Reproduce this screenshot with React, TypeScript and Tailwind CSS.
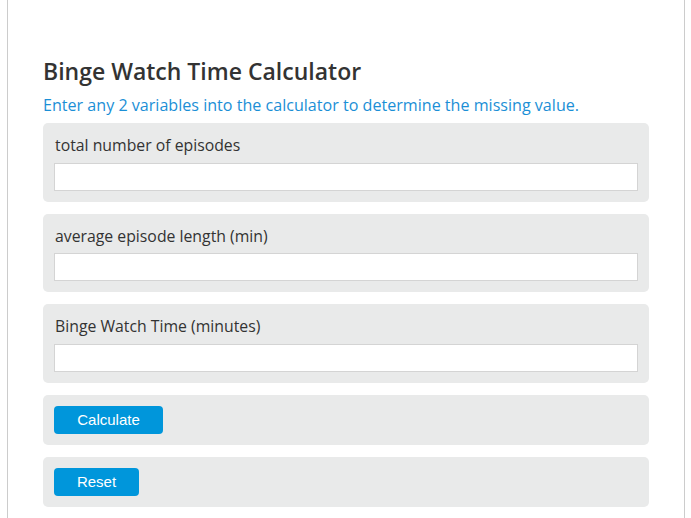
import React from "react";

function Field({ label }: { label: string }) {
  return (
    <div className="rounded-[5px] bg-[#e9eaea] px-[11px] pt-[11px] pb-[11px]">
      <div className="h-[21.67px] text-[15.8px] leading-[22px] text-[#333] pl-[1px]">{label}</div>
      <input className="mt-[7px] block h-[28px] w-full border border-[#d4d4d4] bg-white" />
    </div>
  );
}

function ButtonRow({ label, w }: { label: string; w: string }) {
  return (
    <div className="rounded-[5px] bg-[#e9eaea] p-[11px]">
      <button
        className={`${w} h-[28px] rounded-[4px] bg-[#0096db] text-[15px] text-white`}
        style={{ fontFamily: '"Liberation Sans", Arial, sans-serif' }}
      >
        {label}
      </button>
    </div>
  );
}

export default function App() {
  return (
    <div className="h-[518px] w-[691px] bg-white" style={{ fontFamily: '"Open Sans", "Noto Sans", sans-serif' }}>
      <div className="ml-[7px] h-full w-[678px] border-x border-[#cccccc] px-[35px] pt-[55px]">
        <h1 className="text-[23px] font-semibold leading-[32px] text-[#333]">Binge Watch Time Calculator</h1>
        <p className="mt-[7px] text-[16.1px] leading-[22px] text-[#1b8fd6]">
          Enter any 2 variables into the calculator to determine the missing value.
        </p>
        <div className="mt-[7px] flex flex-col gap-[12px]">
          <Field label="total number of episodes" />
          <Field label="average episode length (min)" />
          <Field label="Binge Watch Time (minutes)" />
          <ButtonRow label="Calculate" w="w-[109px]" />
          <ButtonRow label="Reset" w="w-[85px]" />
        </div>
      </div>
    </div>
  );
}
